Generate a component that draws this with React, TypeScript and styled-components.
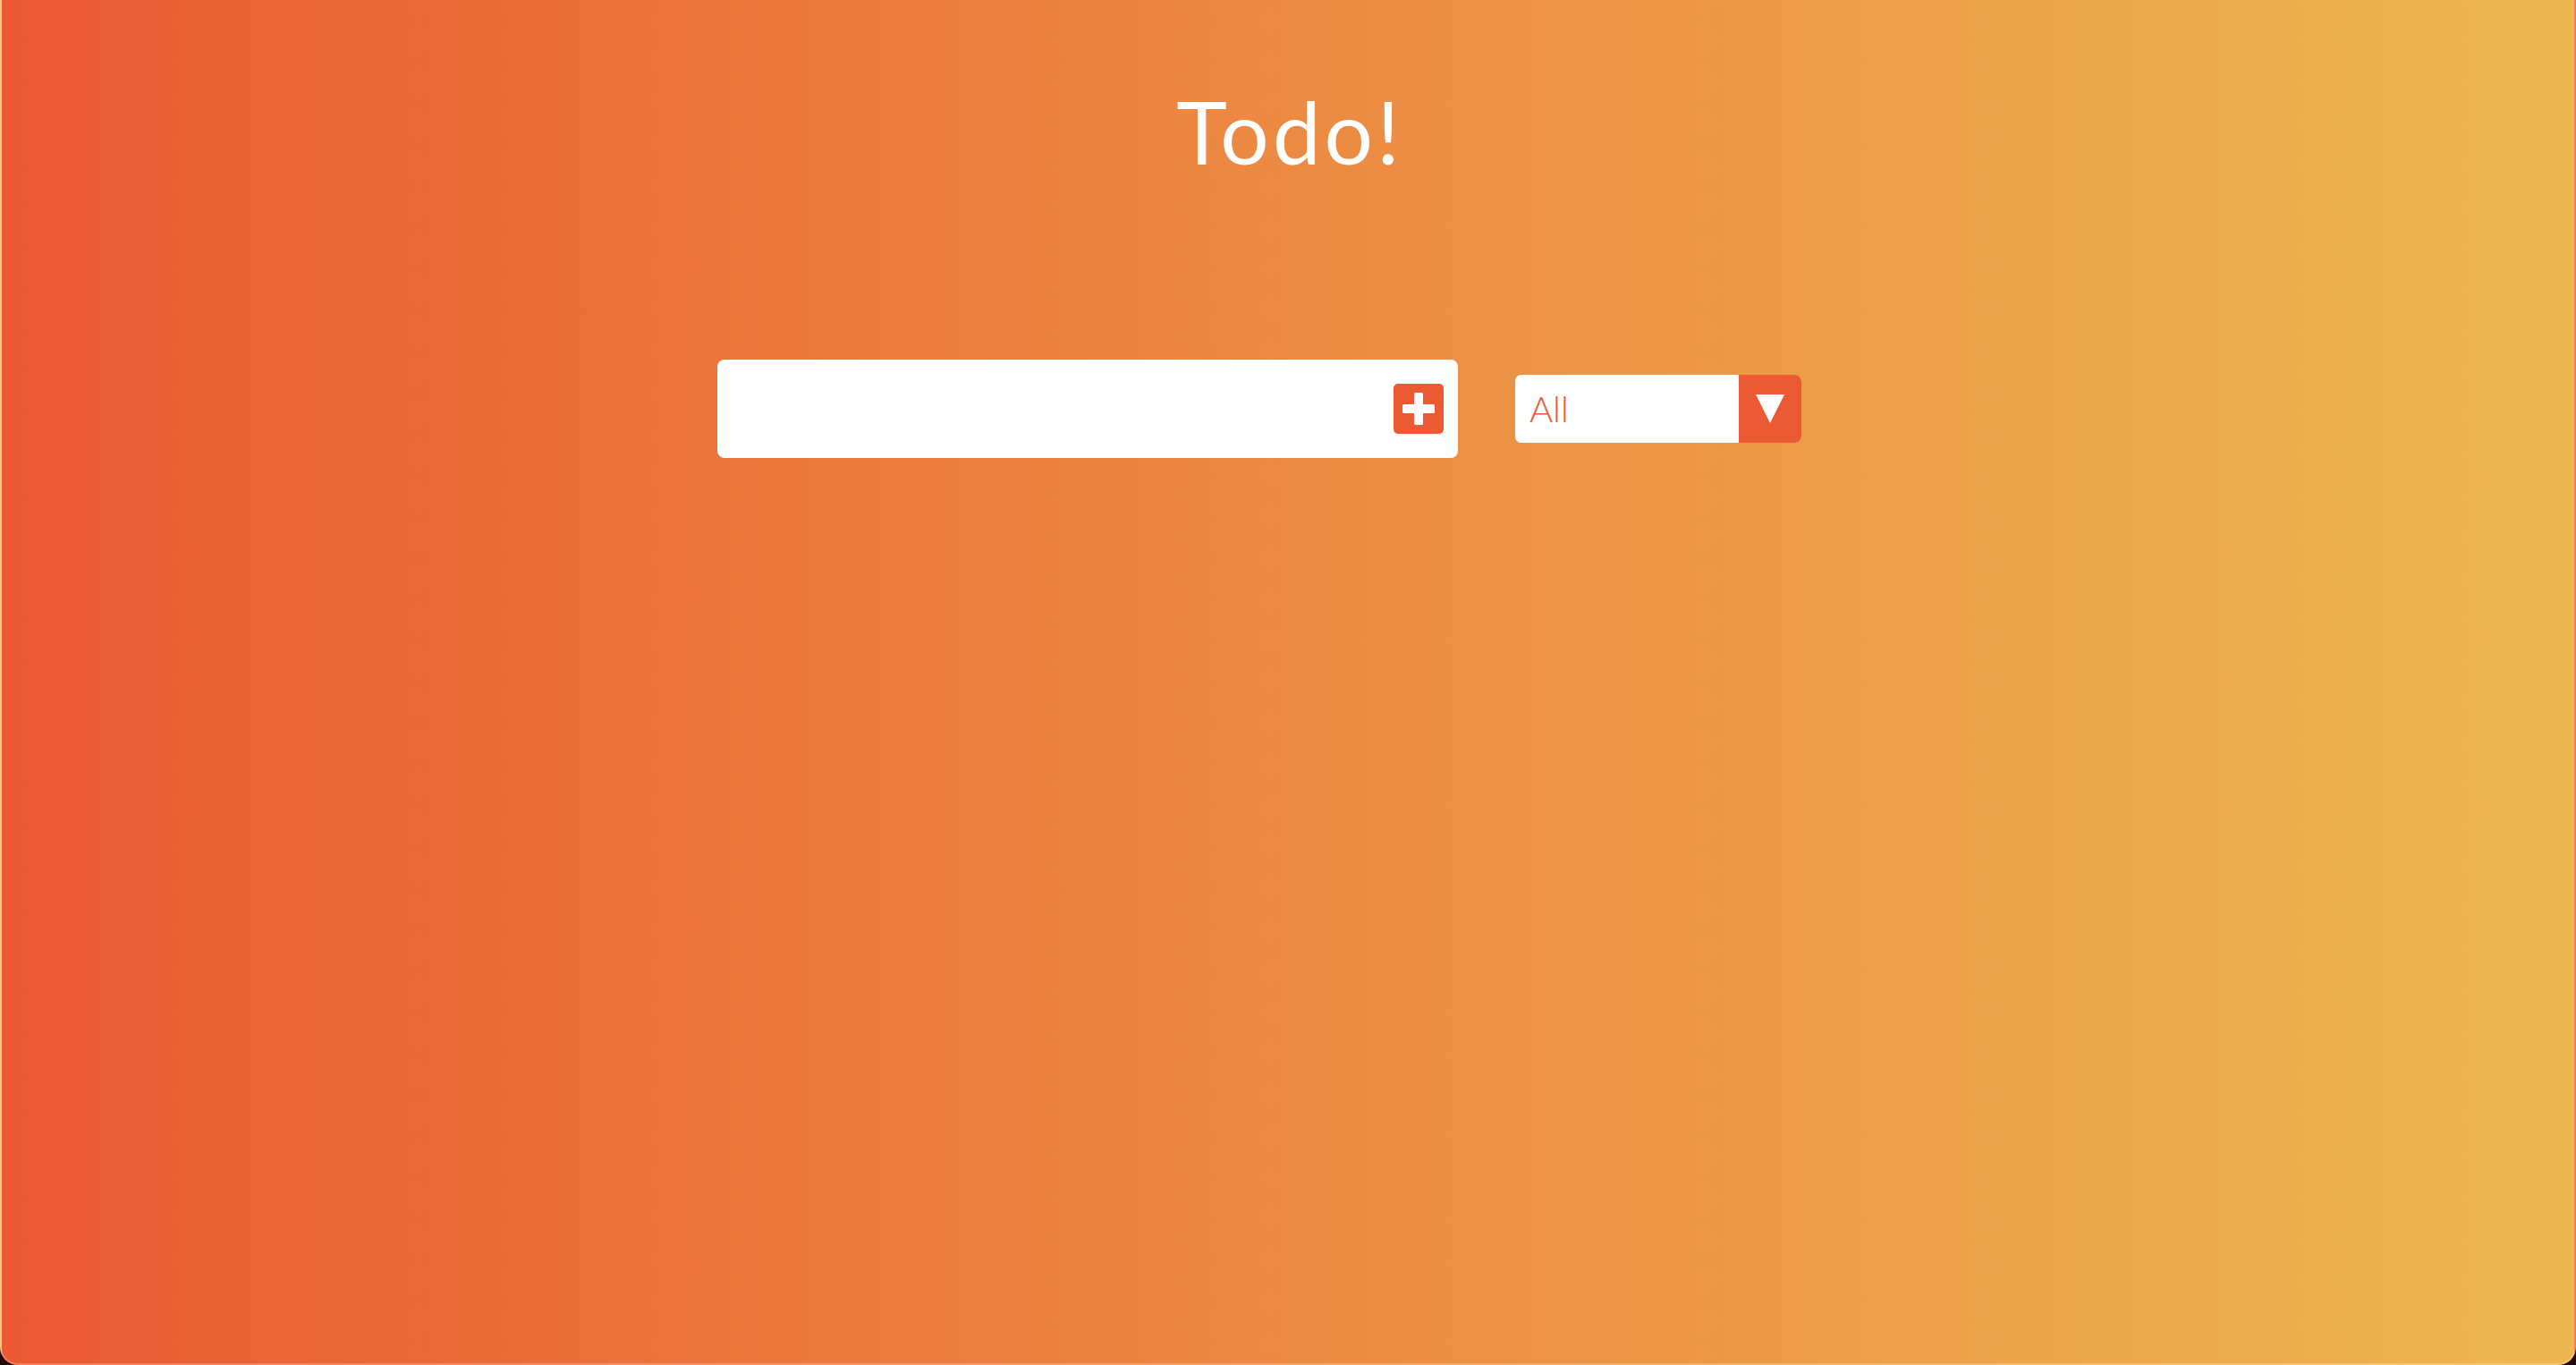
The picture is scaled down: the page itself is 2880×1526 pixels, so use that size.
import React from "react";
import styled, { createGlobalStyle } from "styled-components";

const GlobalStyle = createGlobalStyle`
  * { box-sizing: border-box; }
  html, body { margin: 0; padding: 0; height: 100%; background: #24090d; }
  #root { height: 100%; }
`;

const Window = styled.div`
  height: 100vh;
  background: linear-gradient(to right, #eb5933 0%, #ec8a42 50%, #edb750 100%);
  border-left: 2px solid rgba(255, 255, 255, 0.22);
  border-right: 2px solid rgba(255, 255, 255, 0.22);
  border-bottom: 2px solid rgba(255, 255, 255, 0.22);
  border-radius: 0 0 20px 20px;
  font-family: Lato, "Open Sans", sans-serif;
  display: flex;
  flex-direction: column;
  align-items: center;
`;

const Title = styled.h1`
  margin: 99px 0 0;
  padding-left: 4px;
  font-size: 96px;
  line-height: 1;
  font-weight: 400;
  color: #ffffff;
  letter-spacing: 4px;
`;

const Form = styled.form`
  margin-top: 207px;
  display: flex;
  align-items: center;
  justify-content: center;
`;

const InputBox = styled.div`
  width: 828px;
  height: 110px;
  background: #ffffff;
  border-radius: 8px;
  display: flex;
  align-items: center;
  padding: 0 16px 0 24px;
`;

const TextInput = styled.input`
  flex: 1;
  min-width: 0;
  border: none;
  outline: none;
  background: transparent;
  font-family: Lato, sans-serif;
  font-size: 40px;
  font-weight: 300;
  color: #333;
`;

const AddButton = styled.button`
  flex: 0 0 56px;
  width: 56px;
  height: 56px;
  border: none;
  border-radius: 5px;
  background: #eb5a33;
  display: flex;
  align-items: center;
  justify-content: center;
  padding: 0;
  cursor: pointer;
`;

const SelectBox = styled.div`
  margin: 0 64px;
  width: 320px;
  height: 76px;
  display: flex;
  border-radius: 7px;
  overflow: hidden;
  background: #ffffff;
`;

const Select = styled.select`
  flex: 1 1 0;
  min-width: 0;
  width: 0;
  appearance: none;
  -webkit-appearance: none;
  border: none;
  outline: none;
  background: #ffffff;
  padding: 0 16px;
  font-family: Lato, sans-serif;
  font-size: 40px;
  font-weight: 300;
  color: #eb5a33;
  cursor: pointer;
`;

const Arrow = styled.div`
  flex: 0 0 70px;
  width: 70px;
  background: #eb5a33;
  display: flex;
  align-items: center;
  justify-content: center;
`;

export default function App() {
  return (
    <>
      <GlobalStyle />
      <Window>
        <Title>Todo!</Title>
        <Form onSubmit={(e) => e.preventDefault()}>
          <InputBox>
            <TextInput type="text" />
            <AddButton type="submit" aria-label="Add">
              <svg width="36" height="36" viewBox="0 0 36 36">
                <rect x="13" y="0" width="10" height="36" rx="1.5" fill="#fff" />
                <rect x="0" y="13" width="36" height="10" rx="1.5" fill="#fff" />
              </svg>
            </AddButton>
          </InputBox>
          <SelectBox>
            <Select defaultValue="all">
              <option value="all">All</option>
              <option value="completed">Completed</option>
              <option value="uncompleted">Uncompleted</option>
            </Select>
            <Arrow>
              <svg width="32" height="32" viewBox="0 0 32 32">
                <polygon points="0,0 32,0 16,32" fill="#fff" />
              </svg>
            </Arrow>
          </SelectBox>
        </Form>
      </Window>
    </>
  );
}
